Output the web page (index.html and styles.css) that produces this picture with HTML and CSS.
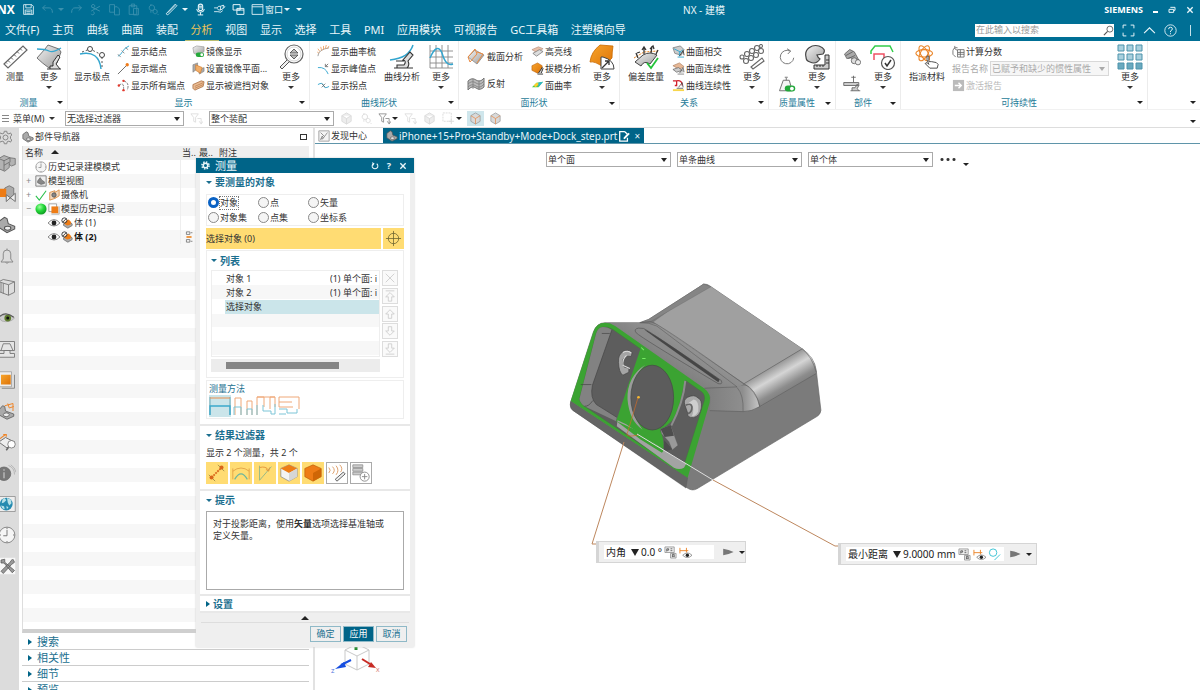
FILE: index.html
```html
<!DOCTYPE html>
<html lang="zh-CN">
<head>
<meta charset="utf-8">
<title>NX - 建模</title>
<link rel="stylesheet" href="styles.css">
</head>
<body>
<svg class="sprite" aria-hidden="true">
  <defs>
    <linearGradient id="metal" x1="0" y1="0" x2="1" y2="1"><stop offset="0" stop-color="#f4f4f4"/><stop offset="1" stop-color="#9b9b9b"/></linearGradient>
    <linearGradient id="amber" x1="0" y1="0" x2="1" y2="1"><stop offset="0" stop-color="#f7a52c"/><stop offset="1" stop-color="#dd7208"/></linearGradient>
    <radialGradient id="lime" cx=".38" cy=".32" r=".7"><stop offset="0" stop-color="#9dff9d"/><stop offset=".5" stop-color="#27d93c"/><stop offset="1" stop-color="#0d9a20"/></radialGradient>
  </defs>
  <symbol id="save" viewBox="0 0 24 24"><path d="M3 3h15l3 3v15H3zM7 3v6h10V3M6 21v-8h12v8M8 16h8M8 19h8" fill="none" stroke="currentColor" stroke-width="1.500"/></symbol>
  <symbol id="undo" viewBox="0 0 24 24"><path d="M8 4 3 9l5 5M3 9h12q6 0 6 9" fill="none" stroke="currentColor" stroke-width="1.800"/></symbol>
  <symbol id="redo" viewBox="0 0 24 24"><path d="m16 4 5 5-5 5m5-5H9q-6 0-6 9" fill="none" stroke="currentColor" stroke-width="1.800"/></symbol>
  <symbol id="cut" viewBox="0 0 24 24"><path d="M4 7l16 8M4 15 20 6M9 3a3 3 0 1 1-4 4 3 3 0 0 1 4-4M8 16a3 3 0 1 1-4 4" fill="none" stroke="currentColor" stroke-width="1.800"/></symbol>
  <symbol id="copy" viewBox="0 0 24 24"><path d="M3 3h9v14H3zM12 7h5l4 4v11h-9z" fill="none" stroke="currentColor" stroke-width="1.600"/></symbol>
  <symbol id="paste" viewBox="0 0 24 24"><path d="M4 5h14v16H4zM8 2h6v5H8zM12 10h9v12h-9z" fill="none" stroke="currentColor" stroke-width="1.600"/></symbol>
  <symbol id="gears" viewBox="0 0 24 24"><path d="M12 4a5 5 0 1 1-6 6 5 5 0 0 1 6-6M18 12a4 4 0 1 1-5 5 4 4 0 0 1 5-5M9 2v3m0 9v4m12 2 2 2" fill="none" stroke="currentColor" stroke-width="1.600"/></symbol>
  <symbol id="pen" viewBox="0 0 24 24"><path d="M2 20 19 2l3 3L5 22zM5 18 19 4" fill="none" stroke="currentColor" stroke-width="1.600"/></symbol>
  <symbol id="mic" viewBox="0 0 24 24"><rect x="8" y="2" width="8" height="12" rx="4" fill="none" stroke="currentColor" stroke-width="2"/><path d="M5 11q0 6 7 6t7-6M12 17v5M7 22h10M9 6h6M9 9h6" fill="none" stroke="currentColor" stroke-width="1.800"/></symbol>
  <symbol id="loop" viewBox="0 0 24 24"><path d="M2 9h6q1-4 6-3l5-2v6l-5 3q-5 1-6-3M2 16h7q6 3 9-2M14 6v7M19 4l3 3-3 3" fill="none" stroke="currentColor" stroke-width="1.600"/></symbol>
  <symbol id="swap" viewBox="0 0 24 24"><path d="M2 3h13v10H2zM9 10h13v11H9zM9 13h13" fill="none" stroke="currentColor" stroke-width="1.800"/></symbol>
  <symbol id="window" viewBox="0 0 24 24"><path d="M2 3h20v18H2zM2 7h20" fill="none" stroke="currentColor" stroke-width="1.600"/></symbol>
  <symbol id="search" viewBox="0 0 24 24"><circle cx="15" cy="9" r="6.500" fill="none" stroke="currentColor" stroke-width="1.800"/><path d="M10 14 2 22" stroke="currentColor" stroke-width="2.500"/></symbol>
  <symbol id="full" viewBox="0 0 24 24"><path d="M2 8V2h6M16 2h6v6M22 16v6h-6M8 22H2v-6" fill="none" stroke="currentColor" stroke-width="1.800"/></symbol>
  <symbol id="up" viewBox="0 0 24 24"><path d="m2 17 10-10 10 10" fill="none" stroke="currentColor" stroke-width="2"/></symbol>
  <symbol id="help" viewBox="0 0 24 24"><circle cx="12" cy="12" r="10.500" fill="none" stroke="currentColor" stroke-width="1.600"/><path d="M8.500 9.500q0-3.500 3.500-3.500t3.500 3q0 2-3.500 4v2M12 17v2" fill="none" stroke="currentColor" stroke-width="1.800"/></symbol>
  <symbol id="restore" viewBox="0 0 24 24"><path d="M7 4h14v9h-4M3 10h14v9H3z" fill="none" stroke="currentColor" stroke-width="3"/></symbol>
  <symbol id="close" viewBox="0 0 24 24"><path d="m4 4 16 16M20 4 4 20" stroke="currentColor" stroke-width="4"/></symbol>

  <symbol id="ruler" viewBox="0 0 26 26"><path d="M2 20 21 2l4 4L6 24z" fill="#fff" stroke="#666" stroke-width="1.200"/><path d="m6 16.500 2 2m1-5 2 2m1-5 2 2m1-5 2 2m1-5 2 2M4 18.500l1 1" stroke="#666" stroke-width="1"/></symbol>
  <symbol id="surface" viewBox="0 0 26 26"><path d="M1 14 9 5 12 1l11 4 2 3-4 11-8 5q-7-5-12-10z" fill="url(#metal)" stroke="#555" stroke-width=".8"/><path d="M1 5q8 0 12 2t12-3" fill="none" stroke="#34a6cf" stroke-width="1.300"/><path d="M11 25h14M14 25v-3h3v-4l5-7 2 2-4 7 4 5" fill="#ddd" stroke="#333"/></symbol>
  <symbol id="poles" viewBox="0 0 26 26"><path d="M1 10q19-4 21 15" fill="none" stroke="#34a6cf" stroke-width="1.500"/><path d="m3 8 8-3 12 6v14" fill="none" stroke="#555" stroke-dasharray="2 2"/><circle cx="11" cy="5" r="2.500" fill="#fff" stroke="#444"/><circle cx="23" cy="11" r="2.500" fill="#fff" stroke="#444"/></symbol>
  <symbol id="lens" viewBox="0 0 26 26"><circle cx="16" cy="10" r="9" fill="#fff" stroke="#666" stroke-width="1.200"/><circle cx="16" cy="10" r="7" fill="none" stroke="#bbb" stroke-width=".6"/><path d="m9 16-7 7 2 2 7-7" fill="#eee" stroke="#555"/><path d="m16 5 4 4h-8zM16 15l4-4h-8z" fill="#bbb" stroke="#444" stroke-width=".8"/></symbol>
  <symbol id="micro" viewBox="0 0 26 26"><path d="M1 16Q20 14 24 1" fill="none" stroke="#34a6cf" stroke-width="1.500"/><path d="M5 24h19M8 24v-3h7q3-4-1-5l7-8 3 3-5 6q2 4-1 7M7 17h8" fill="#ddd" stroke="#333" stroke-width="1.100"/></symbol>
  <symbol id="graph" viewBox="0 0 26 26"><path d="M2 1v23h23M2 7h23M2 13h23M2 19h23M8 1v23M14 1v23M20 1v23" fill="none" stroke="#888" stroke-width=".9"/><path d="M2 14Q9-2 14 9q4 14 11 11" fill="none" stroke="#34a6cf" stroke-width="1.500"/></symbol>
  <symbol id="fan" viewBox="0 0 26 26"><path d="M11 1 24 2q-1 6-1 12L14 23Q6 17 1 18 2 8 11 1z" fill="url(#amber)" stroke="#c96a00" stroke-width=".8"/><path d="M12 13h2q11 3 11 12H12z" fill="#fff" stroke="#444"/><path d="m13 24 7-7m0 4v-4h-4" fill="none" stroke="#333" stroke-width="1.300"/></symbol>
  <symbol id="deviation" viewBox="0 0 26 26"><path d="m2 18 8-7q7-4 14 0l-7 9q-6-4-9 2z" fill="url(#metal)" stroke="#444"/><path d="m1 14 10-6 14-1" fill="none" stroke="#e88422" stroke-dasharray="2 1"/><path d="M5 14 3 9m1 0 3-1M11 10V4m-2 2 2-3 2 3M18 9l1-7m-2 3 3-3 1 3M23 10l2-4" fill="none" stroke="#333" stroke-width="1.300"/><path d="m14 19 4 5 7-10" fill="none" stroke="#25c43b" stroke-width="1.800"/></symbol>
  <symbol id="rings" viewBox="0 0 26 26"><g fill="#fff" stroke="#666" stroke-width="1.100"><circle cx="3" cy="13" r="2"/><circle cx="8" cy="10" r="2.500"/><circle cx="13" cy="7" r="2.500"/><circle cx="18" cy="4" r="2.500"/><circle cx="22" cy="2" r="1.500"/><circle cx="7" cy="17" r="2.500"/><circle cx="12" cy="14" r="2.500"/><circle cx="17" cy="11" r="2.500"/><circle cx="22" cy="7" r="2.500"/><path d="m12 23 11-9 2 3-11 8z"/></g></symbol>
  <symbol id="rotate" viewBox="0 0 24 24"><path d="M16 4a9 9 0 1 0 5 9M12 1l5 3-4 4" fill="none" stroke="#777" stroke-width="1.300"/></symbol>
  <symbol id="weight" viewBox="0 0 24 24"><path d="M7 7h8l4 14H2zM11 7V4m-2-1h4" fill="#f4f4f4" stroke="#666" stroke-width="1.200"/><rect x="9" y="14" width="14" height="8" rx="4" fill="#22a83a"/><circle cx="18.500" cy="18" r="2.500" fill="#fff"/></symbol>
  <symbol id="mass" viewBox="0 0 26 26"><path d="M2 13C0 5 8 0 15 2q8 3 4 8l-6 1q1 3 3 4-4 6-10 3-4-1-4-5z" fill="url(#metal)" stroke="#444" stroke-width="1.200"/><path d="M21 11h4v14H10v-4h11z" fill="#ccc" stroke="#333"/><path d="M13 21v2m3-2v2m3-2v2m3-7h3m-3 3h3" stroke="#333"/></symbol>
  <symbol id="joint" viewBox="0 0 24 24"><path d="m2 8 7-6 6 3 6 11-6 3-4-6-6 1z" fill="#aaa" stroke="#555"/><path d="m4 10 9-5m-6 9 9-4" stroke="#555"/><circle cx="15" cy="17" r="4" fill="#ddd" stroke="#555"/><circle cx="20" cy="19" r="3.500" fill="#eee" stroke="#555"/></symbol>
  <symbol id="probe" viewBox="0 0 24 24"><path d="M1 10h20v4H1zM14 1v9M11 3h6M10 21h13M12 21v-4h4l3-5 2 2-2 4 2 3" fill="#ccc" stroke="#666" stroke-width="1.200"/></symbol>
  <symbol id="profile" viewBox="0 0 26 26"><path d="M1 10V7l4-5h15l3 6" fill="none" stroke="#33cc4a" stroke-width="1.500"/><path d="M4 16v-6h10v5" fill="none" stroke="#ef5164" stroke-width="1.500"/><circle cx="18" cy="19" r="6.500" fill="#fff" stroke="#555" stroke-width="1.200"/><path d="m15 19 2 3 4-6" fill="none" stroke="#333" stroke-width="1.500"/></symbol>
  <symbol id="atoms" viewBox="0 0 28 26"><g fill="none" stroke="#ea8528" stroke-width="1.200"><ellipse cx="11" cy="9" rx="9" ry="4"/><ellipse cx="11" cy="9" rx="9" ry="4" transform="rotate(60 11 9)"/><ellipse cx="11" cy="9" rx="9" ry="4" transform="rotate(120 11 9)"/></g><path d="M14 16v-4h2v6h3l5 1 2 2-1 4h-8l-5-5 2-1 2 2z" fill="#fff" stroke="#444"/></symbol>
  <symbol id="tiles" viewBox="0 0 26 26"><g fill="#a8d0de" stroke="#4d93ab"><path d="M1 1h6v6H1zM10 1h6v6h-6zM19 1h6v6h-6zM1 10h6v6H1zM10 10h6v6h-6zM19 10h6v6h-6z"/><path fill="#69a9bf" d="M1 19h6v6H1zM10 19h6v6h-6zM19 19h6v6h-6z"/></g></symbol>

  <symbol id="knots" viewBox="0 0 14 14"><path d="M1 12q3-1 5-5t7-6" fill="none" stroke="#34a6cf"/><path d="m1 10 3 3m1-7 3 3m1-6 3 2" stroke="#888"/></symbol>
  <symbol id="ends" viewBox="0 0 14 14"><path d="M1 13 11 3" stroke="#666"/><circle cx="11" cy="3" r="1.800" fill="#ef7b1a"/></symbol>
  <symbol id="allends" viewBox="0 0 14 14"><path d="M2 7q6-5 5 5M7 2q7 2 4 10" fill="none" stroke="#777" stroke-dasharray="3 1"/><g fill="#e23a2e"><circle cx="2" cy="7" r="1.300"/><circle cx="7" cy="2" r="1.300"/><circle cx="7" cy="12" r="1.300"/></g></symbol>
  <symbol id="mirror" viewBox="0 0 14 14"><path d="m1 3 4-2 8 1v5l-5 4-6-2z" fill="url(#metal)" stroke="#999" stroke-width=".7"/><rect x="4" y="8" width="9" height="5" rx="2.500" fill="#25a83a"/><circle cx="10.500" cy="10.500" r="1.500" fill="#fff"/></symbol>
  <symbol id="mirrorset" viewBox="0 0 14 14"><path d="m1 3 5-2v6l-5 4zM7 9l6-3v4l-5 3z" fill="#aaa" stroke="#777" stroke-width=".6"/><path d="m4 3 7 3-2 6-5-3z" fill="#f2ae69" stroke="#cf7a2a" stroke-width=".7"/></symbol>
  <symbol id="hidden" viewBox="0 0 14 14"><path d="m1 6 9-4 3 1-1 5-9 4-2-2z" fill="#eabb92" stroke="#a66a3d" stroke-width=".8"/><path d="m3 8 9-4M3 10l9-4" stroke="#b97c4d" stroke-width=".8"/></symbol>
  <symbol id="comb" viewBox="0 0 14 14"><path d="M1 12q0-7 12-9" fill="none" stroke="#999"/><path d="M2 9 0 7m3 0L1 4m4 2L4 2m3 3V1m2 3 1-4m1 4 2-3" stroke="#ee9c5a" stroke-width=".9"/></symbol>
  <symbol id="peak" viewBox="0 0 14 14"><path d="M1 6q8-1 11 7" fill="none" stroke="#34a6cf"/><path d="m9 5 3-3M9 2v3h3" stroke="#777" fill="none"/></symbol>
  <symbol id="inflect" viewBox="0 0 14 14"><path d="M1 6q5-3 6 1t6 1" fill="none" stroke="#34a6cf"/><path d="m5 5 4 4m0-4-4 4" stroke="#666" stroke-width=".8"/></symbol>
  <symbol id="section" viewBox="0 0 18 18"><path d="m1 9 7-7 9 5-7 9z" fill="url(#metal)" stroke="#888" stroke-width=".8"/><path d="m1 9 7-8 2 5-7 8zm9-5 6 2-6 9" fill="none" stroke="#ea8a40"/></symbol>
  <symbol id="wave" viewBox="0 0 18 18"><path d="M1 6q4-4 8-1t8-2v9q-4 4-8 1t-8 2z" fill="#bbb" stroke="#777"/><path d="M1 9q4-4 8-1t8-2M1 12q4-4 8-1t8-2M6 4v10m6-9v10" fill="none" stroke="#777" stroke-width=".7"/></symbol>
  <symbol id="highlight" viewBox="0 0 14 14"><path d="m1 5 7-3 5 2-7 4z" fill="#eac0a8" stroke="#b98" stroke-width=".8"/><path d="m2 9 7-4 4 2-7 5z" fill="#ddd" stroke="#777" stroke-width=".8"/></symbol>
  <symbol id="draft" viewBox="0 0 14 14"><path d="m1 4 6-3 5 3v5l-5 3-6-3z" fill="url(#amber)" stroke="#b55d07" stroke-width=".6"/><path d="M7 13h6M8 12l4-6 1 1-2 5" stroke="#333" fill="#ccc"/></symbol>
  <symbol id="facecurve" viewBox="0 0 14 14"><path d="m1 9 5-5 7-1-5 6z" fill="#54c94b"/><path d="m3 7 3-3 3 1-4 4z" fill="#ffcf2a"/><path d="m8 4 5-1-5 6z" fill="#2bb3d4"/></symbol>
  <symbol id="intersect" viewBox="0 0 14 14"><path d="m1 3 8-2 4 4-3 6-7-2z" fill="#ccc" stroke="#777" stroke-width=".8"/><path d="m2 4 8 4M6 13h7M8 12V8l4-3" stroke="#34a6cf" fill="none"/><path d="m8 12 4-6 1 5" stroke="#444" fill="none"/></symbol>
  <symbol id="continuity" viewBox="0 0 14 14"><path d="m1 4 7-3 5 4-5 3z" fill="#e6b795" stroke="#b58767" stroke-width=".8"/><path d="m1 8 6-2 4 3-6 2zM6 13h7M8 12l4-6 1 5" fill="#ccc" stroke="#666" stroke-width=".8"/></symbol>
  <symbol id="curvecont" viewBox="0 0 14 14"><path d="M1 2h4v5H3M5 2q6-1 6 5" fill="none" stroke="#d1212b" stroke-width="1.400"/><path d="M1 11h12v2H1z" fill="#f7d64d"/><path d="M5 10h7M7 9l4-5 1 5" stroke="#444" stroke-width=".8" fill="none"/></symbol>
  <symbol id="calc" viewBox="0 0 14 14"><path d="M1 6q1-4 5-3M1 6v4l3 3M6 5h7v8H6zM6 8h7m-7 2h7M9 5v8M3 1v3l3 2" fill="none" stroke="#666" stroke-width=".9"/></symbol>
  <symbol id="activate" viewBox="0 0 14 14"><path d="M1 1h12v12H1z" fill="#bbb"/><path d="M3 7h7M7 4l3 3-3 3" stroke="#fff" stroke-width="1.500" fill="none"/></symbol>

  <symbol id="funnel" viewBox="0 0 14 14"><path d="M1 2h8L6 6v5l-2-1V6zM8 7h4v5M10 10l2 3 2-3" fill="none" stroke="currentColor" stroke-width=".9"/></symbol>
  <symbol id="cube" viewBox="0 0 14 14"><path d="m7 1 5 3v6l-5 3-5-3V4zM2 4l5 3 5-3M7 7v6" fill="#e6e6e6" stroke="currentColor"/></symbol>
  <symbol id="cubeorange" viewBox="0 0 14 14"><path d="m7 1 5 3v6l-5 3-5-3V4z" fill="#d9d9d9" stroke="#999" stroke-width=".8"/><path d="M2 4l5 3 5-3M7 7v6" fill="none" stroke="#e58b4c" stroke-width=".8"/></symbol>
  <symbol id="dash" viewBox="0 0 14 14"><path d="M1 1h9v9H1z" fill="none" stroke="currentColor" stroke-dasharray="2 1"/><path d="M10 7v6m-3-3h6" stroke="currentColor"/></symbol>
  <symbol id="part" viewBox="0 0 14 14"><path d="m1 4 4-3 2 1 1 4 5 2v2l-6 3-6-4z" fill="#aaa" stroke="#555" stroke-width=".8"/><ellipse cx="7.500" cy="9.500" rx="2.500" ry="1.500" fill="#eee" stroke="#555" stroke-width=".8"/></symbol>
  <symbol id="clock" viewBox="0 0 24 24"><circle cx="12" cy="12" r="10.500" fill="#f5f5f5" stroke="#888" stroke-width="1.300"/><path d="M12 5v8H7M12 2v2m0 16v2M2 12h2m16 0h2" fill="none" stroke="#777" stroke-width="1.300"/></symbol>
  <symbol id="views" viewBox="0 0 14 14"><path d="M1 1h12v12H1z" fill="#eee" stroke="#777"/><path d="m3 7 3-4 2 3 3 2v2l-4 1-4-2z" fill="#888" stroke="#555" stroke-width=".6"/></symbol>
  <symbol id="check" viewBox="0 0 14 14"><path d="m1 8 4 5 8-11" fill="none" stroke="#27bf4a" stroke-width="1.200"/></symbol>
  <symbol id="camera" viewBox="0 0 14 14"><path d="M2 4 8 2v9l-6 2zM8 4l5-3v7l-5 3" fill="#f2d8bd" stroke="#d98c43"/><circle cx="7" cy="7" r="2.500" fill="#888" stroke="#555"/></symbol>
  <symbol id="ball" viewBox="0 0 14 14"><circle cx="7" cy="7" r="6.500" fill="url(#lime)"/></symbol>
  <symbol id="history" viewBox="0 0 14 14"><path d="M1 1h9v9H1z" fill="#fff" stroke="#999"/><path d="M4 4h8v8H4z" fill="#ee7c15"/><path d="M13 4v9H4" fill="none" stroke="#aaa"/></symbol>
  <symbol id="eye" viewBox="0 0 14 14"><path d="M0 7q7-8 14 0-7 7-14 0z" fill="#fff" stroke="#777"/><circle cx="7" cy="7" r="2.800" fill="#222"/></symbol>
  <symbol id="body" viewBox="0 0 14 14"><path d="m3 8 5-3 5 3v2l-5 3-5-3z" fill="#aaa" stroke="#555" stroke-width=".7"/><path d="m4 5 5-2 3 3-1 3-4 1-3-2z" fill="#ee7c15"/><circle cx="4" cy="4" r="3" fill="#fff" fill-opacity=".6" stroke="#222"/><path d="m2 6 4-4" stroke="#222"/></symbol>
  <symbol id="mark" viewBox="0 0 8 14"><path d="M1 1h4v3H1zm0 9h4v3H1zM6 2h2M6 12h2" fill="none" stroke="#777"/><path d="M1 6h6v2H1z" fill="#ee8a2a"/></symbol>

  <symbol id="gear" viewBox="0 0 24 24"><path d="m10 2 4 0 .500 3 3 1.300 2.500-1.700 2 3.400-2 2v4l2 2-2 3.400-2.500-1.700-3 1.300-.500 3h-4l-.500-3-3-1.300L4 19.400 2 16l2-2v-4L2 8l2-3.400 2.500 1.700 3-1.300z" fill="none" stroke="currentColor" stroke-width="1.600"/><circle cx="12" cy="12" r="4" fill="none" stroke="currentColor" stroke-width="1.600"/></symbol>
  <symbol id="cog" viewBox="0 0 24 24"><circle cx="12" cy="12" r="6" fill="none" stroke="currentColor" stroke-width="4"/><circle cx="12" cy="12" r="9.500" fill="none" stroke="currentColor" stroke-width="4" stroke-dasharray="4 3.460"/></symbol>
  <symbol id="blocks" viewBox="0 0 24 24"><path d="m1 6 7-4 8 3 7 1v8l-5 2-3-2v4l-6 5-7-3z" fill="#b3b3b3" stroke="#666"/><path d="m1 6 7 3 8-4M8 9v13m0-7 7-4v3m1-9v6" fill="none" stroke="#666"/></symbol>
  <symbol id="constraint" viewBox="0 0 24 24"><path d="m9 4 6-3 6 3v10l-6 4-6-3z" fill="#aaa" stroke="#666"/><path d="M1 5h10v11H1z" fill="#ee7c15"/><path d="m11 13 12 9V11L11 22z" fill="#eee" stroke="#666" stroke-width="1.200"/></symbol>
  <symbol id="bell" viewBox="0 0 24 24"><path d="M12 2v2m-8 16h16l-3-4V9q0-5-5-5T7 9v7l-3 4zm6 0q2 4 4 0" fill="none" stroke="#888" stroke-width="1.300"/></symbol>
  <symbol id="books" viewBox="0 0 24 24"><path d="m1 5 6-3 15 3v14l-8 4-13-5zM1 5l13 4 8-4M14 9v14M7 7v14m-3-15v13" fill="#ddd" stroke="#777" stroke-width="1.200"/></symbol>
  <symbol id="greeneye" viewBox="0 0 24 24"><path d="M1 11q11-7 21 1-6 7-17 4z" fill="#ccc" stroke="#999" stroke-width=".8"/><circle cx="13" cy="12" r="4.500" fill="#5e7c2e"/><circle cx="13" cy="12" r="2" fill="#111"/><path d="M1 11q9-9 20 0" fill="none" stroke="#555" stroke-width="1.500"/></symbol>
  <symbol id="bench" viewBox="0 0 24 24"><path d="M1 2h21v12H1zM4 14l3-9h9l4 9M1 18h7v-4h8v4h6v5H1z" fill="#e5e5e5" stroke="#777" stroke-width="1.200"/></symbol>
  <symbol id="square" viewBox="0 0 24 24"><path d="M1 1h17v20H1z" fill="#eee" stroke="#999"/><path d="M4 5h13v13H4z" fill="url(#amber)"/><path d="M22 5v18H5" fill="none" stroke="#888" stroke-width="1.300"/></symbol>
  <symbol id="assembly" viewBox="0 0 24 24"><path d="m1 11 5-6 3 1 1 6 11 4v3l-9 4-11-6z" fill="#aaa" stroke="#555"/><ellipse cx="11" cy="17" rx="4" ry="2.500" fill="#eee" stroke="#555"/><path d="M9 5 20 2v10m-7-10 2 6 6-2" fill="none" stroke="#ee8529" stroke-width="1.300"/></symbol>
  <symbol id="plane" viewBox="0 0 24 24"><path d="m1 12 9-6 12 6-10 8z" fill="#eee" stroke="#666" stroke-width="1.200"/><path d="m2 8 8-6M7 2h4v3" fill="none" stroke="#ee8529" stroke-width="1.500"/><circle cx="18" cy="15" r="5" fill="#fff" stroke="#666"/><path d="m14 19-3 4" stroke="#666" stroke-width="2"/></symbol>
  <symbol id="info" viewBox="0 0 24 24"><circle cx="8" cy="13" r="9" fill="#777" stroke="#666"/><path d="M8 7v2m0 2v8" stroke="#ccc" stroke-width="1.500"/><path d="M14 2q8 3 8 12M17 1q6 4 7 10" fill="none" stroke="#aaa"/></symbol>
  <symbol id="globe" viewBox="0 0 24 24"><path d="M0 2h23v20H0z" fill="#eee" stroke="#888"/><circle cx="11" cy="12" r="8.500" fill="#258bb0"/><path d="m6 6 3-2 2 3-3 3-3 1zm6-2 5 2 1 5-3 3-2-4zM4 14l4 1 1 4-3-1zm7 1 3 1-2 3z" fill="#b9e2e8"/></symbol>
  <symbol id="tools" viewBox="0 0 24 24"><path d="M0 1h23v22H0z" fill="#f7f7f7"/><path d="M4 4v4h4l11 13 3-3L9 7V3zM19 3l-3 4-12 12 3 3L18 10l4-3-2-4" fill="#999" stroke="#555"/></symbol>

  <symbol id="target" viewBox="0 0 18 18"><circle cx="9" cy="9" r="5.500" fill="none" stroke="#68602f" stroke-width=".8"/><path d="M9 1v16M1 9h16" stroke="#68602f" stroke-width=".8"/></symbol>
  <symbol id="arrowup" viewBox="0 0 14 14"><path d="m7 2 5 5H9v5H5V7H2z" fill="none" stroke="#ccc"/></symbol>
  <symbol id="arrowtop" viewBox="0 0 14 14"><path d="M2 1h10M7 3l5 5H9v5H5V8H2z" fill="none" stroke="#ccc"/></symbol>
  <symbol id="xmark" viewBox="0 0 14 14"><path d="m2 2 10 10M12 2 2 12" stroke="#ccc"/></symbol>
  <symbol id="m1" viewBox="0 0 22 22"><path d="M1 20V2M21 20V2" stroke="#6fa9b5"/><path d="M1 3h20" stroke="#ea8f4f"/><path d="M1 20V11h20v9" fill="none" stroke="#3ca9cc" stroke-width="1.300"/></symbol>
  <symbol id="m2" viewBox="0 0 22 22"><path d="M3 20V3h6v17M15 20V6h5v14" fill="none" stroke="#efa878"/><path d="M2 20v-8h7v8M15 20v-6h5v6" fill="none" stroke="#7cc5d7"/></symbol>
  <symbol id="m3" viewBox="0 0 22 22"><path d="M2 20V2h7v10M15 14V2h5v10M2 2h18" fill="none" stroke="#efa878"/><path d="M2 20V10m6 0v6h8v3h4V9" fill="none" stroke="#7cc5d7"/></symbol>
  <symbol id="m4" viewBox="0 0 22 22"><path d="M21 14V2H1v5h13M1 7v5h14" fill="none" stroke="#efa878"/><path d="M1 14h8v4h10v-4M1 19h7" fill="none" stroke="#7cc5d7"/></symbol>
  <symbol id="f1" viewBox="0 0 22 22"><path d="M2 13l7 7M12 2l7 7" stroke="#8b7a3d" stroke-width=".8"/><path d="m5 16 11-11" stroke="#d9661b" stroke-width="2" stroke-dasharray="2 1"/><circle cx="5" cy="16" r="2.200" fill="#d9661b"/><circle cx="16" cy="5" r="2.200" fill="#d9661b"/></symbol>
  <symbol id="f2" viewBox="0 0 22 22"><path d="M2 9q9-7 18 0M2 6v12m18-12v12" stroke="#df9c41" fill="none" stroke-width=".9"/><path d="M4 18q7-12 14 0" fill="none" stroke="#6cb69d" stroke-width="1.300"/></symbol>
  <symbol id="f3" viewBox="0 0 22 22"><path d="M5 3v16L18 4" fill="none" stroke="#8db68a"/><path d="M5 5q7-2 10 3m-3-1 3 2 1-4" fill="none" stroke="#df8c31" stroke-width=".9"/></symbol>
  <symbol id="f4" viewBox="0 0 22 22"><path d="m11 2 9 4v9l-9 5-9-5V6z" fill="#f3f3f3" stroke="#777" stroke-width=".7"/><path d="m11 2 9 4-9 5-9-5z" fill="#ee7c15"/><path d="m11 11 9-5v9l-9 5z" fill="#d6d6d6"/></symbol>
  <symbol id="f5" viewBox="0 0 22 22"><path d="m11 2 9 4v9l-9 5-9-5V6z" fill="#ee7c15" stroke="#b85e07" stroke-width=".7"/><path d="m11 11 9-5v9l-9 5z" fill="#cf6606"/></symbol>
  <symbol id="f6" viewBox="0 0 22 22"><path d="M2 5q3 3 0 6M6 4q4 4 0 8M10 3q4 5 0 10M14 2q4 4 1 8" fill="none" stroke="#dc9860"/><path d="m9 18 9-8 2 2-9 8z" fill="#eee" stroke="#555"/></symbol>
  <symbol id="f7" viewBox="0 0 22 22"><path d="M2 2h11v3H2zM2 6h11v3H2zM2 10h11v3H2z" fill="#ccc" stroke="#888" stroke-width=".8"/><circle cx="15" cy="15" r="5" fill="#fff" stroke="#888"/><path d="M15 12v6m-3-3h6" stroke="#888"/></symbol>
  <symbol id="pexpr" viewBox="0 0 14 14"><path d="M1 1h10v6H1zM7 8h6v5H7z" fill="#eee" stroke="#888" stroke-width=".8"/><path d="M3 6V3h2v1.500H3M7 3h2M7 5h2M9 12V9h2v3M9 11h2" fill="none" stroke="#444" stroke-width=".8"/></symbol>
  <symbol id="seedim" viewBox="0 0 14 14"><path d="M1 2v6M1 5h9M8 2v5" stroke="#ea8529" fill="none"/><path d="M4 10q5-5 10 0-5 5-10 0z" fill="#fff" stroke="#777" stroke-width=".8"/><circle cx="9" cy="10" r="1.800" fill="#222"/></symbol>
  <symbol id="circleline" viewBox="0 0 14 14"><circle cx="5.500" cy="5" r="4" fill="none" stroke="#37c1d3"/><path d="m7 13 6-6" stroke="#37c1d3"/></symbol>
  <symbol id="pin" viewBox="0 0 14 10"><path d="M1 1q7 1 13 4-6 3-13 4z" fill="#777"/></symbol>
  <symbol id="edit" viewBox="0 0 14 14"><path d="M8 2H2v11h9V9M8 2l3 3-4 5" fill="none" stroke="#fff" stroke-width="1.500"/><path d="m7 10 6-6" stroke="#fff" stroke-width="2"/></symbol>
  <symbol id="discover" viewBox="0 0 14 14"><path d="M1 1h12v12H1z" fill="#f4f4f4" stroke="#999"/><path d="m3 3 4 4m4-4-6 8M3 11l3-2-1-2z" stroke="#666" stroke-width=".8" fill="none"/></symbol>
  <symbol id="reset" viewBox="0 0 14 14"><path d="M4 3a5 5 0 1 0 6 0M2 1l3 2-2 3" fill="none" stroke="currentColor" stroke-width="1.800"/></symbol>
</svg>

<div class="app">
  <header class="header">
    <div class="titlebar">
      <strong class="logo">NX</strong>
      <div class="quick">
        <button aria-label="保存"><svg><use href="#save"/></svg></button>
        <button class="dim" aria-label="撤销"><svg><use href="#undo"/></svg><i class="caret"></i></button>
        <button class="dim" aria-label="重做"><svg><use href="#redo"/></svg></button>
        <button class="dim" aria-label="剪切"><svg><use href="#cut"/></svg></button>
        <button class="dim" aria-label="复制"><svg><use href="#copy"/></svg></button>
        <button class="dim" aria-label="粘贴"><svg><use href="#paste"/></svg></button>
        <button class="dim" aria-label="重复命令"><svg><use href="#gears"/></svg></button>
        <button aria-label="草图"><svg><use href="#pen"/></svg><i class="caret"></i></button>
        <button aria-label="语音"><svg><use href="#mic"/></svg></button>
        <button aria-label="触控"><svg><use href="#loop"/></svg></button>
        <button aria-label="切换窗口"><svg><use href="#swap"/></svg></button>
        <button class="win"><svg><use href="#window"/></svg>窗口<i class="caret"></i></button>
        <button class="last" aria-label="更多"><i class="caret"></i></button>
      </div>
      <h1>NX - 建模</h1>
      <div class="system">
        <strong>SIEMENS</strong>
        <button aria-label="最小化"><i class="minus"></i></button>
        <button aria-label="还原"><svg><use href="#restore"/></svg></button>
        <button aria-label="关闭"><svg><use href="#close"/></svg></button>
      </div>
    </div>
    <div class="menubar">
      <nav>
        <a href="#">文件(F)</a><a href="#">主页</a><a href="#">曲线</a><a href="#">曲面</a><a href="#">装配</a><a href="#" class="on">分析</a><a href="#">视图</a><a href="#">显示</a><a href="#">选择</a><a href="#">工具</a><a href="#">PMI</a><a href="#">应用模块</a><a href="#">可视报告</a><a href="#">GC工具箱</a><a href="#">注塑模向导</a>
      </nav>
      <div class="find">
        <label class="searchbox"><input type="text" placeholder="在此输入以搜索" aria-label="搜索"><svg><use href="#search"/></svg></label>
        <button aria-label="全屏"><svg><use href="#full"/></svg></button>
        <button aria-label="折叠"><svg><use href="#up"/></svg></button>
        <button aria-label="帮助"><svg><use href="#help"/></svg></button>
        <i class="bar"></i>
      </div>
    </div>
  </header>

  <section class="ribbon">
    <div class="group g-measure">
      <div class="tools">
        <button class="big"><svg><use href="#ruler"/></svg>测量</button>
        <button class="big"><svg><use href="#surface"/></svg>更多<i class="caret"></i></button>
      </div>
      <div class="foot"><span>测量</span><i class="caret"></i></div>
    </div>
    <div class="group g-display">
      <div class="tools">
        <button class="big"><svg><use href="#poles"/></svg>显示极点</button>
        <div class="rows">
          <button><svg><use href="#knots"/></svg>显示结点</button>
          <button><svg><use href="#ends"/></svg>显示端点</button>
          <button><svg><use href="#allends"/></svg>显示所有端点</button>
        </div>
        <div class="rows">
          <button><svg><use href="#mirror"/></svg>镜像显示</button>
          <button><svg><use href="#mirrorset"/></svg>设置镜像平面...</button>
          <button><svg><use href="#hidden"/></svg>显示被遮挡对象</button>
        </div>
        <button class="big"><svg><use href="#lens"/></svg>更多<i class="caret"></i></button>
      </div>
      <div class="foot"><span>显示</span><i class="caret"></i></div>
    </div>
    <div class="group g-curve">
      <div class="tools">
        <div class="rows">
          <button><svg><use href="#comb"/></svg>显示曲率梳</button>
          <button><svg><use href="#peak"/></svg>显示峰值点</button>
          <button><svg><use href="#inflect"/></svg>显示拐点</button>
        </div>
        <button class="big"><svg><use href="#micro"/></svg>曲线分析</button>
        <button class="big"><svg><use href="#graph"/></svg>更多<i class="caret"></i></button>
      </div>
      <div class="foot"><span>曲线形状</span><i class="caret"></i></div>
    </div>
    <div class="group g-face">
      <div class="tools">
        <div class="rows two">
          <button><svg><use href="#section"/></svg>截面分析</button>
          <button><svg><use href="#wave"/></svg>反射</button>
        </div>
        <div class="rows">
          <button><svg><use href="#highlight"/></svg>高亮线</button>
          <button><svg><use href="#draft"/></svg>拔模分析</button>
          <button><svg><use href="#facecurve"/></svg>面曲率</button>
        </div>
        <button class="big"><svg><use href="#fan"/></svg>更多<i class="caret"></i></button>
      </div>
      <div class="foot"><span>面形状</span><i class="caret"></i></div>
    </div>
    <div class="group g-relation">
      <div class="tools">
        <button class="big"><svg><use href="#deviation"/></svg>偏差度量</button>
        <div class="rows">
          <button><svg><use href="#intersect"/></svg>曲面相交</button>
          <button><svg><use href="#continuity"/></svg>曲面连续性</button>
          <button><svg><use href="#curvecont"/></svg>曲线连续性</button>
        </div>
        <button class="big"><svg><use href="#rings"/></svg>更多<i class="caret"></i></button>
      </div>
      <div class="foot"><span>关系</span><i class="caret"></i></div>
    </div>
    <div class="group g-mass">
      <div class="tools">
        <div class="rows two">
          <button aria-label="更新"><svg><use href="#rotate"/></svg></button>
          <button aria-label="重量"><svg><use href="#weight"/></svg></button>
        </div>
        <button class="big"><svg><use href="#mass"/></svg>更多<i class="caret"></i></button>
      </div>
      <div class="foot"><span>质量属性</span><i class="caret"></i></div>
    </div>
    <div class="group g-part">
      <div class="tools">
        <div class="rows two">
          <button aria-label="间隙"><svg><use href="#joint"/></svg></button>
          <button aria-label="检查"><svg><use href="#probe"/></svg></button>
        </div>
        <button class="big"><svg><use href="#profile"/></svg>更多<i class="caret"></i></button>
      </div>
      <div class="foot"><span>部件</span><i class="caret"></i></div>
    </div>
    <div class="group g-sustain">
      <div class="tools">
        <button class="big"><svg><use href="#atoms"/></svg>指派材料</button>
        <div class="rows">
          <button><svg><use href="#calc"/></svg>计算分数</button>
          <div class="report"><label for="report">报告名称</label><span class="select off"><select id="report" disabled><option>已赋予和缺少的惯性属性</option></select></span></div>
          <button disabled><svg><use href="#activate"/></svg>激活报告</button>
        </div>
        <button class="big"><svg><use href="#tiles"/></svg>更多<i class="caret"></i></button>
      </div>
      <div class="foot"><span>可持续性</span><i class="caret"></i></div>
    </div>
    <div class="group g-rest"><div class="tools"></div><div class="foot"><span></span><i class="caret"></i></div></div>
  </section>

  <section class="filters">
    <button class="menu"><span class="burger"></span>菜单(M)<i class="caret"></i></button>
    <span class="select sel-filter"><select aria-label="选择过滤器"><option>无选择过滤器</option></select></span>
    <svg class="faint"><use href="#funnel"/></svg>
    <span class="select sel-scope"><select aria-label="选择范围"><option>整个装配</option></select></span>
    <div class="snap">
      <button class="faint" aria-label="体"><svg><use href="#cube"/></svg></button>
      <button class="faint" aria-label="关联"><svg><use href="#gears"/></svg></button>
      <button class="soft" aria-label="过滤"><svg><use href="#funnel"/></svg><i class="caret"></i></button>
      <button class="faint" aria-label="点"><svg><use href="#funnel"/></svg></button>
      <button class="faint" aria-label="面"><svg><use href="#cube"/></svg></button>
      <button class="soft" aria-label="框选"><svg class="faint"><use href="#dash"/></svg><i class="caret"></i></button>
      <button class="lit" aria-label="高亮"><svg><use href="#cubeorange"/></svg></button>
      <button aria-label="着色"><svg><use href="#cubeorange"/></svg></button>
    </div>
    <i class="caret end"></i>
  </section>

  <main class="work">
    <aside class="rail">
      <button aria-label="设置"><svg><use href="#gear"/></svg></button>
      <button aria-label="装配导航器"><svg><use href="#blocks"/></svg></button>
      <button aria-label="约束导航器"><svg><use href="#constraint"/></svg></button>
      <button class="on" aria-label="部件导航器"><svg><use href="#part"/></svg></button>
      <button aria-label="通知"><svg><use href="#bell"/></svg></button>
      <button aria-label="重用库"><svg><use href="#books"/></svg></button>
      <button aria-label="视图"><svg><use href="#greeneye"/></svg></button>
      <button aria-label="工作台"><svg><use href="#bench"/></svg></button>
      <button aria-label="历史"><svg><use href="#square"/></svg></button>
      <button aria-label="装配"><svg><use href="#assembly"/></svg></button>
      <button aria-label="平面"><svg><use href="#plane"/></svg></button>
      <button aria-label="信息"><svg><use href="#info"/></svg></button>
      <button aria-label="网页"><svg><use href="#globe"/></svg></button>
      <button aria-label="历史记录"><svg><use href="#clock"/></svg></button>
      <button aria-label="工具"><svg><use href="#tools"/></svg></button>
    </aside>

    <section class="navigator">
      <h2><svg><use href="#part"/></svg>部件导航器<i class="box"></i></h2>
      <div class="tree">
        <table>
          <colgroup><col class="c-name"><col class="c-cur"><col class="c-new"><col></colgroup>
          <thead><tr><th>名称<i class="caret rise"></i></th><th>当..</th><th>最..</th><th>附注</th></tr></thead>
          <tbody>
            <tr><td><div class="node"><i class="exp"></i><svg><use href="#clock"/></svg>历史记录建模模式</div></td><td></td><td></td><td></td></tr>
            <tr><td><div class="node"><i class="exp">+</i><svg><use href="#views"/></svg>模型视图</div></td><td></td><td></td><td></td></tr>
            <tr><td><div class="node"><i class="exp">+</i><svg><use href="#check"/></svg><svg><use href="#camera"/></svg>摄像机</div></td><td></td><td></td><td></td></tr>
            <tr><td><div class="node"><i class="exp">−</i><svg><use href="#ball"/></svg><svg><use href="#history"/></svg>模型历史记录</div></td><td></td><td></td><td></td></tr>
            <tr><td><div class="node child"><svg><use href="#eye"/></svg><svg><use href="#body"/></svg>体 (1)</div></td><td></td><td></td><td></td></tr>
            <tr class="current"><td><div class="node child"><svg><use href="#eye"/></svg><svg><use href="#body"/></svg>体 (2)</div></td><td><svg><use href="#mark"/></svg></td><td></td><td></td></tr>
          </tbody>
        </table>
      </div>
      <div class="drawers">
        <button><i class="tri"></i>搜索</button>
        <button><i class="tri"></i>相关性</button>
        <button><i class="tri"></i>细节</button>
        <button><i class="tri"></i>预览</button>
      </div>
    </section>

    <section class="stage">
      <div class="tabs">
        <a href="#"><svg><use href="#discover"/></svg>发现中心</a>
        <a href="#" class="on"><svg><use href="#part"/></svg>iPhone+15+Pro+Standby+Mode+Dock_step.prt<svg><use href="#edit"/></svg><span>×</span></a>
      </div>
      <div class="canvas">
        <div class="picks">
          <span class="select"><select aria-label="面规则"><option>单个面</option></select></span>
          <span class="select"><select aria-label="曲线规则"><option>单条曲线</option></select></span>
          <span class="select"><select aria-label="体规则"><option>单个体</option></select></span>
          <button aria-label="更多"><i class="dots"></i></button><i class="caret"></i>
        </div>
        <svg class="scene" viewBox="315 144 885 546" role="img" aria-label="支架模型">
          <defs>
            <linearGradient id="roll" gradientUnits="userSpaceOnUse" x1="690" y1="285" x2="745" y2="380"><stop offset="0" stop-color="#8b8b8b"/><stop offset=".35" stop-color="#d5d5d5"/><stop offset=".7" stop-color="#8c8c8c"/><stop offset="1" stop-color="#747474"/></linearGradient>
            <linearGradient id="slope" gradientUnits="userSpaceOnUse" x1="430" y1="200" x2="380" y2="280"><stop offset="0" stop-color="#959595"/><stop offset="1" stop-color="#818181"/></linearGradient>
            <linearGradient id="corner" x1="0" y1="0" x2="1" y2="0"><stop offset="0" stop-color="#7d7d7d"/><stop offset=".7" stop-color="#8e8e8e"/><stop offset="1" stop-color="#c4c4c4"/></linearGradient>
          </defs>
          <g transform="translate(540 270) scale(.334)" stroke-linejoin="round">
            <path d="M490 42q11-1 22 8l273 186q37 26 42 64l14 120q-1 12-11 18L470 655q-15 8-30-3L98 420q-10-8-6-25l68-210q10-27 35-27h103l27-10L475 52z" fill="#7b7b7b" stroke="#666" stroke-width="2"/>
            <path d="M512 50 785 236 612 340 340 156 490 47z" fill="#a0a0a0"/>
            <path d="m490 42 22 8-182 105-32 3 27-10L475 52z" fill="#858585" stroke="#666"/>
            <path d="M195 158h103l50 3 262 180-20 12-80-1-22 2-280-195z" fill="url(#slope)"/>
            <path d="M785 236q40 26 42 75l-166 99q-15-55-51-70z" fill="url(#roll)"/>
            <path d="m492 354 98-3q20-10 38 0 25 25 28 58-20 15-50 15l-98-3 4-40z" fill="url(#corner)"/>
            <path d="m298 158 32-4q20 1 280 187l175-105M300 158q25-2 50 10l240 182-98 4M608 423q2-50-18-71M508 421l100 3q25 0 48-14l171-100M610 340q35 18 48 68M785 236q30 24 42 70" fill="none" stroke="#585858" stroke-width="1.600"/>
            <path d="M295 174q-16 3-7 14 15 15 245 152 15 4 10-9Q330 184 310 175z" fill="#8a8a8a" stroke="#555" stroke-width="2"/>
            <path d="M312 178q25 8 226 150l-4 8Q340 200 312 178z" fill="#464646"/>
            <path d="M92 393 442 622l-5 31L98 420q-10-10-6-27z" fill="#656565" stroke="#555"/>
            <path d="M92 392 160 185q9-27 35-27 15 0 30 10l265 185q24 17 18 44l-66 225z" fill="#3ba332"/>
            <path d="M188 171q16-3 30 7l264 185q14 10 10 28l-58 184q-9 25-34 13L133 408q-20-16-13-30l48-188q5-15 20-19z" fill="#5d5d5d" stroke="#3d7235"/>
            <path d="M168 190q6-18 20-19 16 0 27 9l-58 165q-8 38 12 58l61 38-2 12-95-45q-20-16-13-30z" fill="#828282"/>
            <path d="m215 180-58 165q-8 38 12 58l61 38M185 190h24M122 343h32m4 48q-12 18-25 17" fill="none" stroke="#444" stroke-width="2"/>
            <path d="M305 232 437 326l-10 35q-12 65-32 90-22 22-36 28 13 22 11 62L228 452l74-220z" fill="#3ba332"/>
            <path d="M315 284q-55 36-53 103 5 64 45 91-30-40-34-85-3-67 42-109z" fill="#9b9b9b"/>
            <ellipse cx="336" cy="382" rx="64" ry="97" fill="#5c5c5c" stroke="#464646" stroke-width="2"/>
            <path d="M435 332q-6 65-42 134" fill="none" stroke="#8d8d8d" stroke-width="6"/>
            <path d="m361 476 30-12 12 34 10 27-17 14-10-25-22-24z" fill="#999" stroke="#555"/>
            <path d="m361 476 30-12 10 32-28 4zM372 510l24 27-26 7z" fill="#4d4d4d"/>
            <path d="M276 247q-12-11-27-3-16 10-14 33 1 29 13 38l18-9v-12l-13-3q-8-8-5-22 5-14 25-10z" fill="#a5a5a5" stroke="#444" stroke-width="2"/>
            <path d="M259 256q-14 12-10 30l20 9M248 247q16-8 25 2" fill="none" stroke="#ddd" stroke-width="3"/>
            <path d="M433 402q-4-14 9-21 20-10 31 2 13 5 10 30-4 25-24 29-20 0-17-14z" fill="#a9a9a9" stroke="#444" stroke-width="2"/>
            <path d="m436 404 24-16q17 3 14 35-8 17-19 14 8-18 0-32z" fill="#cecece"/><path d="M436 405q17-8 19 5 0 16-12 20" fill="none" stroke="#666" stroke-width="5"/>
            <path d="m232 450 26 12 130 88 50 30-7 12q-14 7-30 0L230 468z" fill="#a3a3a3"/>
            <path d="M228 452 300 485 370 541l-5 6-65-40z" fill="#3ba332"/>
            <path d="M294 380 263 484q-9 15 13 13l18-3" fill="none" stroke="#d46c23" stroke-width="2"/><circle cx="295" cy="381" r="4" fill="#f4b832"/>
            <path d="m303 232 8 8m-5 25h10" stroke="#78ec65" stroke-width="3"/>
          </g>
          <path d="M624 442 592 544h5M713 480l122 66h5" fill="none" stroke="#bd875e"/>
          <path d="m637 434 76 46" stroke="#ddd"/>
          <g fill="none" stroke="#c9c9c9"><path d="m345 650 12-6 12 6v14l-12 6-12-6zM345 650l12 6 12-6M357 656v14"/></g>
          <path d="m351 660-10 5" stroke="#184fe0" stroke-width="2"/><path d="m335 669 9-7 2 5z" fill="#184fe0"/><path d="m362 659 8 5" stroke="#c72b24" stroke-width="2"/><path d="m376 668-8-1 3-5z" fill="#c72b24"/><path d="M356 647v3" stroke="#238b2d" stroke-width="3"/>
          <text x="331" y="673" fill="#4b70dc" font-size="6">Z</text><text x="376" y="672" fill="#d36b65" font-size="6">X</text>
        </svg>
        <div class="callout angle"><span class="value"><b>内角</b><i class="caret large"></i>0.0 °<svg><use href="#pexpr"/></svg><svg><use href="#seedim"/></svg></span><svg><use href="#pin"/></svg><i class="caret"></i></div>
        <div class="callout dist"><span class="value"><b>最小距离</b><i class="caret large"></i>9.0000 mm<svg><use href="#pexpr"/></svg><svg><use href="#seedim"/></svg><svg><use href="#circleline"/></svg></span><svg><use href="#pin"/></svg><i class="caret"></i></div>
      </div>
    </section>
  </main>

  <form class="dialog" role="dialog" aria-label="测量">
    <header><svg><use href="#cog"/></svg><h2>测量</h2><button type="button" aria-label="重置"><svg><use href="#reset"/></svg></button><button type="button">?</button><button type="button" aria-label="关闭"><svg><use href="#close"/></svg></button></header>
    <div class="sheet">
      <section class="s-objects">
        <h3><i class="caret"></i>要测量的对象</h3>
        <div class="frame radios">
          <label><input type="radio" name="kind" checked><span class="focus">对象</span></label>
          <label><input type="radio" name="kind">点</label>
          <label><input type="radio" name="kind">矢量</label>
          <label><input type="radio" name="kind">对象集</label>
          <label><input type="radio" name="kind">点集</label>
          <label><input type="radio" name="kind">坐标系</label>
        </div>
        <div class="pick"><span>选择对象 (0)</span><button type="button" aria-label="选择点"><svg><use href="#target"/></svg></button></div>
        <div class="frame list">
          <h3><i class="caret"></i>列表</h3>
          <div class="listbody">
            <div class="listrows">
              <table><tbody>
                <tr><td>对象 1</td><td>(1) 单个面: i</td></tr>
                <tr><td>对象 2</td><td>(1) 单个面: i</td></tr>
                <tr class="sel"><td>选择对象</td><td></td></tr>
              </tbody></table>
            </div>
            <div class="order">
              <button type="button" aria-label="移除"><svg><use href="#xmark"/></svg></button>
              <button type="button" aria-label="置顶"><svg><use href="#arrowtop"/></svg></button>
              <button type="button" aria-label="上移"><svg><use href="#arrowup"/></svg></button>
              <button type="button" class="down" aria-label="下移"><svg><use href="#arrowup"/></svg></button>
              <button type="button" class="down" aria-label="置底"><svg><use href="#arrowtop"/></svg></button>
            </div>
          </div>
          <div class="scroll"><i></i></div>
        </div>
        <div class="frame method">
          <h4>测量方法</h4>
          <div><button type="button" class="on" aria-label="方法 1"><svg><use href="#m1"/></svg></button><button type="button" aria-label="方法 2"><svg><use href="#m2"/></svg></button><button type="button" aria-label="方法 3"><svg><use href="#m3"/></svg></button><button type="button" aria-label="方法 4"><svg><use href="#m4"/></svg></button></div>
        </div>
      </section>
      <section class="s-results">
        <h3><i class="caret"></i>结果过滤器</h3>
        <p>显示 2 个测量，共 2 个</p>
        <div class="toggles">
          <button type="button" class="on" aria-label="距离"><svg><use href="#f1"/></svg></button><button type="button" class="on" aria-label="弧长"><svg><use href="#f2"/></svg></button><button type="button" class="on" aria-label="角度"><svg><use href="#f3"/></svg></button><button type="button" class="on" aria-label="面"><svg><use href="#f4"/></svg></button><button type="button" class="on" aria-label="体"><svg><use href="#f5"/></svg></button><button type="button" aria-label="全部"><svg><use href="#f6"/></svg></button><button type="button" aria-label="自定义"><svg><use href="#f7"/></svg></button>
        </div>
      </section>
      <section class="s-hint">
        <h3><i class="caret"></i>提示</h3>
        <p class="hint">对于投影距离，使用<b>矢量</b>选项选择基准轴或定义矢量。</p>
      </section>
      <section class="s-settings"><h3><i class="tri"></i>设置</h3></section>
    </div>
    <div class="fold"><i class="caret rise"></i></div>
    <footer><button type="button">确定</button><button type="button" class="primary">应用</button><button type="button">取消</button></footer>
  </form>
</div>
</body>
</html>
```

FILE: styles.css
```css
* { box-sizing: border-box; }
body { margin: 0; font: 9px/12px "Noto Sans", "Noto Sans CJK SC", sans-serif; color: #333; background: #fff; }
h1, h2, h3, h4, p { margin: 0; font: inherit; }
button, select, input { font: inherit; color: inherit; }
button { border: 0; padding: 0; background: none; display: flex; align-items: center; white-space: nowrap; }
a { color: inherit; text-decoration: none; }
i { font-style: normal; }
svg { display: block; flex: none; }
table { border-collapse: collapse; table-layout: fixed; width: 100%; }
td, th { padding: 0; font-weight: 400; text-align: left; white-space: nowrap; }
.sprite { position: absolute; width: 0; height: 0; }
.app { position: relative; height: 100vh; display: flex; flex-direction: column; overflow: hidden; }

.caret { width: 0; height: 0; flex: none; border: 3px solid transparent; border-top-color: currentColor; border-bottom: 0; }
.caret.rise { border: 4px solid transparent; border-bottom-color: #222; border-top: 0; }
.caret.large { border-width: 4px; border-top-width: 7px; border-bottom: 0; }
.tri { width: 0; height: 0; border: 3px solid transparent; border-left: 4px solid #006487; border-right: 0; }

/* Header */
.header { flex: none; background: #006f95; color: #e9f6fa; }
.titlebar { height: 19px; display: grid; grid-template-columns: 1fr auto 1fr; align-items: center; position: relative; }
.logo { position: absolute; left: -3px; top: 2px; font: 700 12px/16px "Open Sans", sans-serif; color: #fff; }
.quick { display: flex; gap: 6px; padding-left: 22px; align-items: center; }
.quick svg { width: 13px; height: 13px; }
.quick button { gap: 4px; }
.quick .win { gap: 1px; }
.quick .dim { opacity: .25; }
.titlebar h1 { font-size: 10px; line-height: 16px; padding-left: 208px; }
.system { display: flex; justify-content: flex-end; align-items: center; gap: 10px; padding-right: 6px; }
.system strong { font: 700 9px/12px "Open Sans", sans-serif; color: #fff; }
.system svg { width: 8px; height: 8px; }
.minus { width: 5px; height: 2px; background: #fff; margin-top: 5px; }
.menubar { height: 22px; display: flex; justify-content: space-between; font-size: 11px; }
.menubar nav { flex: 0 0 626px; display: flex; justify-content: space-between; padding: 0 0 0 5px; line-height: 21px; white-space: nowrap; }
.menubar nav a { border-bottom: 1px solid transparent; }
.menubar nav .on { color: #eec45a; border-color: #b9bd72; padding: 0 6px; margin: 0 -6px; }
.find { display: flex; align-items: center; gap: 8px; padding-right: 9px; }
.find button svg { width: 13px; height: 13px; }
.searchbox { display: flex; align-items: center; width: 139px; height: 13px; background: #fff; color: #555; }
.searchbox input { flex: 1; min-width: 0; border: 0; padding: 0 1px; background: none; outline: 0; font-size: 9px; }
.searchbox input::placeholder { color: #999; }
.searchbox svg { width: 11px; height: 11px; }
.bar { width: 1px; height: 11px; background: #c5e2ea; margin-left: 5px; }

/* Ribbon */
.ribbon { flex: none; height: 68px; display: flex; color: #333; }
.group { display: flex; flex-direction: column; flex: none; border-right: 1px solid #ececec; }
.tools { flex: 1; display: flex; align-items: flex-start; padding-top: 2px; }
.foot { height: 13px; display: flex; align-items: center; padding-right: 4px; color: #267b98; }
.foot span { flex: 1; text-align: center; }
.foot .caret { color: #222; }
.big { flex-direction: column; padding-top: 1px; }
.big svg { width: 26px; height: 26px; margin-bottom: 1px; }
.big .caret { margin-top: 3px; }
.rows { display: grid; grid-auto-rows: 17px; }
.rows button { gap: 1px; }
.rows svg { width: 13px; height: 13px; }
.rows.two { grid-auto-rows: 27px; }
.rows.two button { gap: 2px; }
.rows.two svg { width: 18px; height: 18px; }
.rows button:disabled { color: #bbb; }
.g-measure { width: 68px; }
.g-measure .tools { padding-left: 2px; gap: 8px; }
.g-display { width: 242px; }
.g-display .tools { padding-left: 6px; gap: 7px; }
.g-display .big:last-child { margin-left: 2px; }
.g-curve { width: 149px; }
.g-curve .tools { padding-left: 7px; gap: 8px; }
.g-face { width: 161px; }
.g-face .tools { padding-left: 8px; gap: 8px; }
.g-relation { width: 149px; }
.g-relation .tools { padding-left: 8px; gap: 8px; }
.g-mass { width: 67px; }
.g-mass .tools { padding-left: 9px; gap: 8px; }
.g-part { width: 65px; }
.g-part .tools { padding-left: 7px; gap: 9px; }
.g-sustain { width: 247px; }
.g-sustain .tools { padding-left: 8px; gap: 7px; }
.g-sustain .big:last-child { margin-left: 1px; }
.g-rest { flex: 1; border: 0; }
.report { display: flex; align-items: center; gap: 2px; color: #aaa; }

.select { position: relative; display: block; height: 15px; }
.select select { appearance: none; display: block; width: 100%; height: 100%; border: 1px solid #aaa; border-radius: 0; background: #fff; padding: 0 12px 0 1px; color: #333; opacity: 1; }
.select::after { content: ""; position: absolute; right: 4px; top: 6px; border: 3px solid transparent; border-top: 4px solid #222; border-bottom: 0; pointer-events: none; }
.select.off { width: 119px; }
.select.off select { color: #aaa; border-color: #d8d8d8; background: #f6f6f6; }
.select.off::after { border-top-color: #aaa; }

/* Filter bar */
.filters { flex: none; height: 19px; display: flex; align-items: center; border-top: 1px solid #f1f1f1; border-bottom: 1px solid #ddd; padding-left: 2px; }
.menu { width: 63px; gap: 4px; }
.burger { width: 7px; height: 7px; border: 1px solid #888; border-width: 1px 0; background: linear-gradient(#888, #888) center / 100% 1px no-repeat; }
.sel-filter { width: 119px; }
.sel-scope { width: 125px; }
.filters > svg { width: 13px; height: 13px; margin: 0 6px; }
.faint { color: #ccc; opacity: .7; }
.soft { color: #888; }
.snap { display: flex; align-items: center; gap: 4px; margin-left: 5px; }
.snap button { padding: 1px 1px; gap: 1px; }
.snap svg { width: 13px; height: 13px; }
.snap .caret { color: #222; }
.snap .lit { background: #cfe6ec; padding: 1px 2px; }
.filters .end { margin: 6px 4px 0 auto; color: #222; }

/* Workspace */
.work { flex: 1; min-height: 0; display: grid; grid-template-columns: 19px 294px 1fr; }
.rail { background: #dcdcdc; color: #888; overflow: hidden; }
.rail button { width: 100%; height: 31px; }
.rail button:first-child { height: 19px; }
.rail svg { width: 18px; height: 20px; margin-left: -2px; }
.rail button:first-child svg { width: 15px; height: 15px; }
.rail .on { background: #fff; }
.navigator { display: flex; flex-direction: column; min-height: 0; padding-left: 3px; }
.navigator h2 { flex: none; height: 18px; display: flex; align-items: center; gap: 1px; }
.navigator h2 svg { width: 12px; height: 12px; }
.box { width: 7px; height: 6px; border: 1px solid #333; margin-left: auto; margin-right: 6px; }
.tree { flex: 1; min-height: 0; border-left: 1px solid #ddd; border-bottom: 4px solid #cfcfcf; margin-right: 4px; background: repeating-linear-gradient(#fff 0 14px, #f7f7f7 14px 28px); }
.tree th { height: 14px; line-height: 14px; background: #efefef; padding-left: 2px; }
.tree th .caret { display: inline-block; margin: 0 0 2px 8px; }
.tree td { height: 14px; border-right: 1px solid #eee; }
.tree tr:nth-child(even) td { background: #f7f7f7; }
.tree tr:nth-child(odd) td { background: #fff; }
.c-name { width: 157px; }
.c-cur { width: 17px; }
.c-new { width: 20px; }
.node { display: flex; align-items: center; gap: 1px; height: 14px; padding-left: 3px; white-space: nowrap; }
.node svg { width: 12px; height: 12px; }
.node.child { padding-left: 25px; }
.exp { width: 8px; color: #888; }
.current td { font-weight: 700; color: #111; }
.current td > svg { width: 8px; height: 12px; margin-left: 4px; }
.drawers { flex: 0 0 57px; overflow: hidden; padding-top: 1px; }
.drawers button { width: 287px; height: 16px; gap: 5px; padding-left: 6px; border-bottom: 1px solid #ccc; color: #1b6f8f; font-size: 11px; line-height: 14px; }

.stage { display: flex; flex-direction: column; min-width: 0; border-left: 2px solid #e2e2e2; }
.tabs { flex: none; height: 16px; display: flex; border-bottom: 1px solid #5f95aa; }
.tabs a { display: flex; align-items: center; gap: 1px; padding: 0 16px 0 3px; }
.tabs svg { width: 12px; height: 12px; }
.tabs .on { background: #006488; color: #e9f6fa; padding: 0 4px 0 3px; font-size: 10px; white-space: nowrap; }
.tabs .on span { margin-left: 3px; }
.canvas { position: relative; flex: 1; min-height: 0; overflow: hidden; }
.scene { position: absolute; left: 0; top: 0; width: 885px; height: 546px; }
.picks { position: relative; z-index: 1; display: flex; justify-content: center; align-items: center; gap: 6px; padding-top: 8px; }
.picks .select { width: 125px; height: 15px; }
.dots { width: 18px; height: 3px; background: radial-gradient(circle, #333 1px, transparent 2px) 0 0 / 6px 3px; }
.picks > .caret { margin: 10px 0 0; color: #222; }
.callout { position: absolute; display: flex; align-items: center; gap: 5px; height: 22px; border: 1px solid #d5d5d5; border-left: 3px solid #d5d5d5; background: #efefef; padding: 0 4px 0 5px; white-space: nowrap; color: #222; font-size: 10px; }
.value { flex: 1; min-width: 0; height: 14px; display: flex; align-items: center; gap: 2px; background: #fff; padding-left: 2px; }
.value b { font-weight: 400; margin-right: 3px; }
.value svg { width: 13px; height: 13px; }
.callout > svg { width: 12px; height: 8px; }
.angle { left: 281px; top: 397px; width: 150px; }
.dist { left: 523px; top: 399px; width: 199px; }
.angle .value { flex: 0 0 110px; margin-right: 3px; }

/* Measure dialog */
.dialog { position: absolute; z-index: 2; left: 196px; top: 158px; width: 218px; background: #efefef; box-shadow: 0 0 2px #ccc; }
.dialog > header { height: 15px; display: flex; align-items: center; gap: 8px; background: #006488; color: #e9f6fa; padding: 0 7px 0 5px; }
.dialog > header svg { width: 8px; height: 8px; }
.dialog > header > svg { width: 9px; height: 9px; margin-right: -3px; }
.dialog > header h2 { flex: 1; font-size: 11px; }
.dialog > header button { font-weight: 700; }
.sheet { margin: 0 4px; background: #fff; }
.sheet > section { padding: 0 6px; border-bottom: 2px solid #e8e8e8; }
.sheet h3 { display: flex; align-items: center; gap: 3px; height: 18px; font-size: 10px; font-weight: 700; color: #1b6f8f; }
.sheet .frame { border: 1px solid #eee; }
.radios { display: grid; grid-template-columns: 50px 50px 1fr; grid-auto-rows: 15px; margin-top: 3px; padding-left: 1px; }
.radios label { display: flex; align-items: center; gap: 1px; white-space: nowrap; }
.radios input { appearance: none; width: 11px; height: 11px; margin: 0; border: 1px solid #888; border-radius: 50%; background: #f5f5f5; }
.radios input:checked { border: 3px solid #0a62c4; background: #fff; }
.focus { outline: 1px dotted #777; }
.pick { display: flex; gap: 2px; height: 21px; margin-top: 2px; }
.pick span { flex: 1; background: #ffdc73; line-height: 21px; }
.pick button { width: 21px; background: #ffdc73; justify-content: center; }
.pick svg { width: 17px; height: 17px; }
.list { margin-top: 1px; padding: 0 4px 5px; }
.list h3 { height: 19px; }
.listbody { display: flex; gap: 2px; }
.listrows { flex: 1; min-width: 0; height: 87px; overflow: hidden; padding-top: 1px; border: 1px solid #eee; background: repeating-linear-gradient(#fff 0 14px, #f7f7f7 14px 28px); }
.listrows td { height: 14px; overflow: hidden; }
.listrows td:first-child { width: 118px; padding-left: 14px; }
.listrows .sel td:first-child { background: linear-gradient(90deg, #fff 13px, #cbe5ea 13px); }
.listrows .sel td + td { background: #cbe5ea; }
.order { display: flex; flex-direction: column; justify-content: space-between; width: 16px; margin-right: 1px; }
.order button { width: 16px; height: 16px; border: 1px solid #ddd; justify-content: center; background: #fafafa; }
.order svg { width: 12px; height: 12px; }
.order .down svg { transform: rotate(180deg); }
.scroll { margin: 2px 19px 0 0; height: 13px; background: #ececec; padding: 3px 41px 3px 15px; }
.scroll i { display: block; height: 7px; background: #858585; }
.method { margin: 2px 0 5px; padding: 2px 2px 1px; }
.method h4 { color: #1b6f8f; }
.method div { display: flex; gap: 1px; }
.method svg { width: 22px; height: 22px; }
.method .on { background: #cbe5ea; }
.s-results p { height: 18px; line-height: 18px; }
.toggles { display: flex; gap: 2px; padding-bottom: 5px; }
.toggles button { width: 22px; height: 22px; border: 1px solid #aaa; }
.toggles svg { width: 20px; height: 20px; }
.toggles .on { background: #ffdc73; border-color: #ffdc73; }
.hint { height: 79px; margin: 2px 0 4px; padding: 6px 14px 6px 6px; border: 1px solid #aaa; }
.s-settings h3 { height: 15px; }
.fold { height: 10px; display: flex; justify-content: center; align-items: center; margin: 0 5px; border-bottom: 1px solid #ddd; }
.dialog footer { display: flex; justify-content: flex-end; gap: 2px; padding: 3px 7px 5px; }
.dialog footer button { width: 31px; height: 16px; justify-content: center; border: 1px solid #8fb9c7; color: #1b6f8f; }
.dialog footer .primary { background: #006488; color: #fff; }
```
